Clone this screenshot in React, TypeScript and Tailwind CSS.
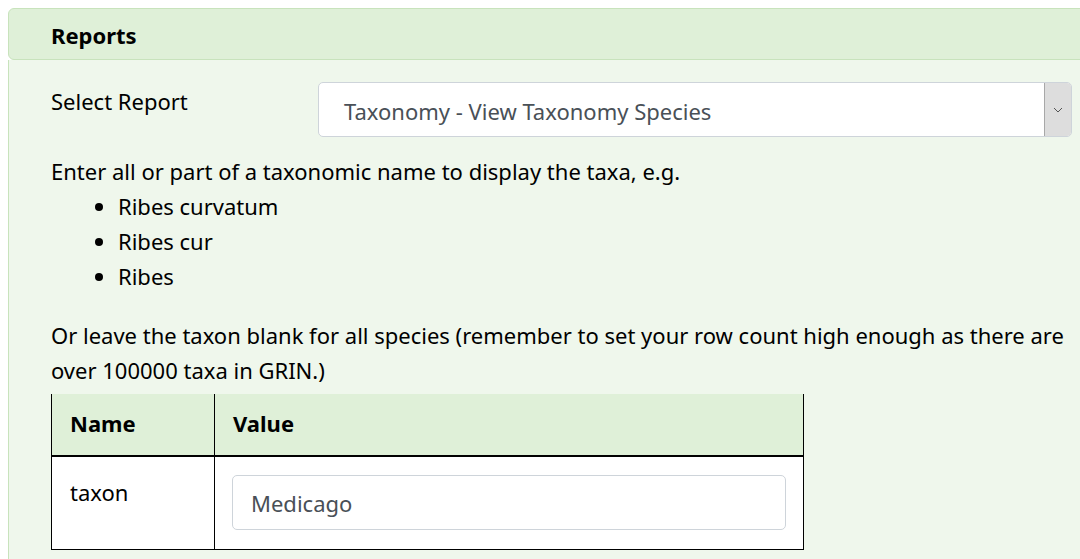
import React from "react";

const examples = ["Ribes curvatum", "Ribes cur", "Ribes"];

export default function App() {
  return (
    <div
      className="w-[1080px] h-[559px] overflow-hidden bg-white text-[22px] leading-[35px] text-black"
      style={{ fontFamily: '"Noto Sans", "Open Sans", sans-serif' }}
    >
      <div className="ml-[8px] mt-[8px] w-[1100px]">
        <div className="h-[52px] flex items-center pl-[42px] pt-[2px] bg-[#dff0d8] border border-[#c8e3bc] rounded-[6px]">
          <span className="font-bold">Reports</span>
        </div>
        <div className="bg-[#eff7ec] border-l border-[#c8e3bc] pl-[42px] pt-[22px] pb-[20px]">
          <div className="flex items-start">
            <label className="w-[267px] pt-[2px]">Select Report</label>
            <div className="w-[754px] h-[55px] flex bg-white border border-[#ced4da] rounded-[5px] overflow-hidden">
              <div className="flex-1 flex items-center pl-[25px] pt-[3px] text-[#495057]">
                Taxonomy - View Taxonomy Species
              </div>
              <div className="w-[27px] h-full bg-[#dddddd] border-l border-[#a8a8a8] flex items-center justify-center">
                <svg width="10" height="6" viewBox="0 0 10 6" fill="none">
                  <path d="M1 1 L5 5 L9 1" stroke="#555" strokeWidth="1" />
                </svg>
              </div>
            </div>
          </div>

          <p className="mt-[17px]">Enter all or part of a taxonomic name to display the taxa, e.g.</p>
          <ul className="list-disc pl-[67px] mb-[24px]">
            {examples.map((e) => (
              <li key={e}>{e}</li>
            ))}
          </ul>

          <p className="w-[1020px]">
            Or leave the taxon blank for all species (remember to set your row count high enough as there are
            over 100000 taxa in GRIN.)
          </p>

          <table className="mt-[6px] w-[753px] border-collapse">
            <thead>
              <tr className="bg-[#dff0d8]">
                <th className="w-[163px] text-left font-bold px-[18px] pt-[12px] pb-[14px] border-l border-r border-b-2 border-black">
                  Name
                </th>
                <th className="text-left font-bold px-[18px] pt-[12px] pb-[14px] border-r border-b-2 border-black">Value</th>
              </tr>
            </thead>
            <tbody>
              <tr className="bg-white">
                <td className="align-top px-[18px] pt-[18px] pb-[19px] border-l border-r border-b border-black">taxon</td>
                <td className="px-[17px] pt-[18px] pb-[19px] border-r border-b border-black">
                  <div className="h-[55px] flex items-center pl-[18px] pt-[2px] border border-[#ced4da] rounded-[5px] text-[#495057]">
                    Medicago
                  </div>
                </td>
              </tr>
            </tbody>
          </table>
        </div>
      </div>
    </div>
  );
}
